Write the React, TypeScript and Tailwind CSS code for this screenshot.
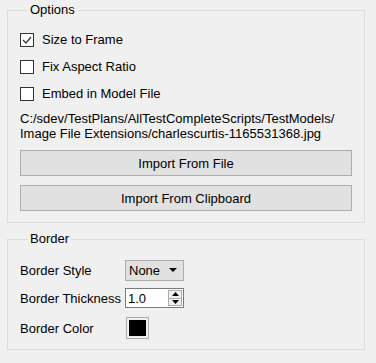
const font = { fontFamily: '"Liberation Sans", Arial, sans-serif' };

const CheckRow = ({ label, checked }: { label: string; checked?: boolean }) => (
  <div className="flex items-center h-[27px]">
    <div className="w-[14px] h-[14px] border border-[#333333] bg-white flex items-center justify-center">
      {checked && (
        <svg width="10" height="10" viewBox="0 0 10 10">
          <polyline points="1,5 4,8 9,2" fill="none" stroke="#333333" strokeWidth="1.2" />
        </svg>
      )}
    </div>
    <span className="ml-[8px]">{label}</span>
  </div>
);

const PushButton = ({ label }: { label: string }) => (
  <button className="w-full h-[26px] bg-[#e1e1e1] border border-[#adadad] text-black">
    {label}
  </button>
);

export default function App() {
  return (
    <div
      className="w-[376px] h-[363px] bg-[#f0f0f0] text-black text-[13px] leading-[15px] pl-[7px] pr-[11px] pt-[2px] overflow-hidden"
      style={font}
    >
      {/* Options */}
      <fieldset className="border border-[#dcdcdc] px-[12px] pb-[11px]">
        <legend className="ml-[8px] px-[2px] leading-[16px]">Options</legend>
        <div className="pt-[8px]">
          <CheckRow label="Size to Frame" checked />
          <CheckRow label="Fix Aspect Ratio" />
          <CheckRow label="Embed in Model File" />
        </div>
        <div className="mt-[4px]">
          C:/sdev/TestPlans/AllTestCompleteScripts/TestModels/
          <br />
          Image File Extensions/charlescurtis-1165531368.jpg
        </div>
        <div className="mt-[9px] flex flex-col gap-[9px]">
          <PushButton label="Import From File" />
          <PushButton label="Import From Clipboard" />
        </div>
      </fieldset>

      {/* Border */}
      <fieldset className="mt-[8px] border border-[#dcdcdc] px-[12px] pb-[10px]">
        <legend className="ml-[8px] px-[2px] leading-[16px]">Border</legend>
        <div className="mt-[12px] flex items-center h-[22px]">
          <span className="w-[105px]">Border Style</span>
          <div className="w-[59px] h-[21px] bg-[#e1e1e1] border border-[#adadad] flex items-center justify-between pl-[3px] pr-[6px]">
            <span>None</span>
            <svg width="8" height="4" viewBox="0 0 8 4">
              <polygon points="0,0 8,0 4,4" fill="#000" />
            </svg>
          </div>
        </div>
        <div className="mt-[6px] flex items-center h-[22px]">
          <span className="w-[105px]">Border Thickness</span>
          <div className="w-[59px] h-[20px] bg-white border border-[#7a7a7a] flex items-center justify-between pl-[2px] pr-[1px]">
            <span>1.0</span>
            <div className="flex flex-col h-[16px] w-[14px]">
              <div className="flex-1 border border-[#adadad] bg-[#f0f0f0] flex items-center justify-center">
                <svg width="7" height="4" viewBox="0 0 7 4">
                  <polygon points="0,4 7,4 3.5,0" fill="#000" />
                </svg>
              </div>
              <div className="flex-1 border border-t-0 border-[#adadad] bg-[#f0f0f0] flex items-center justify-center">
                <svg width="7" height="4" viewBox="0 0 7 4">
                  <polygon points="0,0 7,0 3.5,4" fill="#000" />
                </svg>
              </div>
            </div>
          </div>
        </div>
        <div className="mt-[8px] flex items-center h-[22px]">
          <span className="w-[106px]">Border Color</span>
          <div className="w-[23px] h-[22px] border border-[#adadad] bg-[#f0f0f0] p-[2px]">
            <div className="w-full h-full bg-black" />
          </div>
        </div>
      </fieldset>
    </div>
  );
}
